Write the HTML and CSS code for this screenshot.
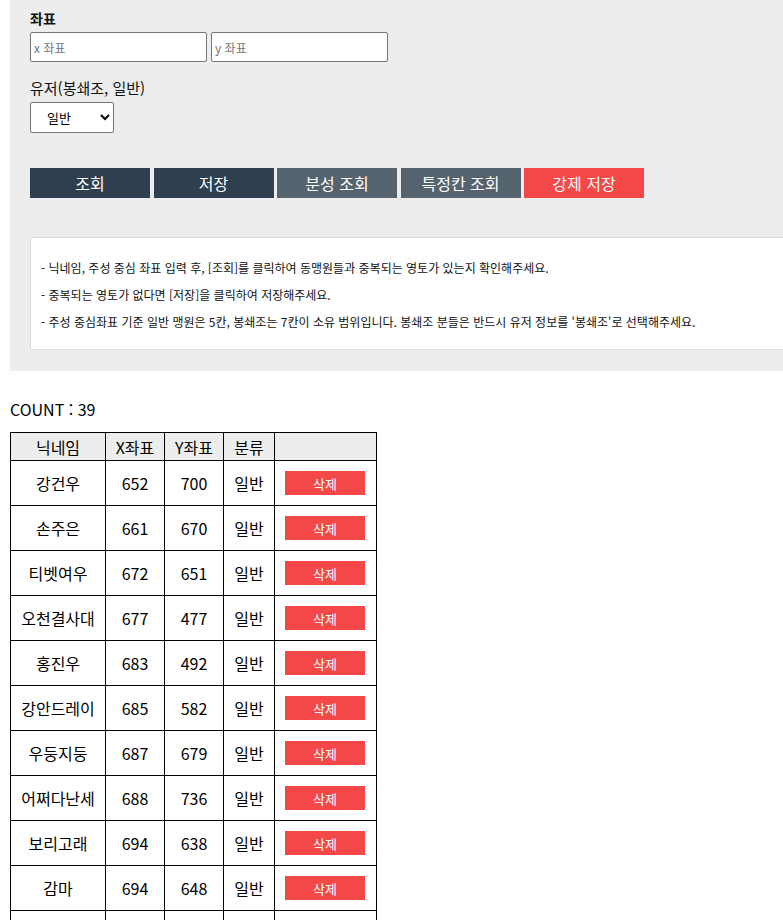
FILE: index.html
```html
<!DOCTYPE html>
<html lang="ko">
<head>
<meta charset="utf-8">
<link rel="stylesheet" href="styles.css">
</head>
<body>
<div class="panel">
  <div class="label">좌표</div>
  <div class="coords">
    <input class="field" type="text" placeholder="x 좌표">
    <input class="field" type="text" placeholder="y 좌표">
  </div>
  <div class="label label2">유저(봉쇄조, 일반)</div>
  <select class="sel">
    <option>일반</option>
    <option>봉쇄조</option>
  </select>
  <div class="buttons">
    <button class="btn dark">조회</button>
    <button class="btn dark">저장</button>
    <button class="btn slate">분성 조회</button>
    <button class="btn slate">특정칸 조회</button>
    <button class="btn red">강제 저장</button>
  </div>
  <div class="info">
    <p>- 닉네임, 주성 중심 좌표 입력 후, [조회]를 클릭하여 동맹원들과 중복되는 영토가 있는지 확인해주세요.</p>
    <p>- 중복되는 영토가 없다면 [저장]을 클릭하여 저장해주세요.</p>
    <p>- 주성 중심좌표 기준 일반 맹원은 5칸, 봉쇄조는 7칸이 소유 범위입니다. 봉쇄조 분들은 반드시 유저 정보를 '봉쇄조'로 선택해주세요.</p>
  </div>
</div>
<div class="count">COUNT : 39</div>
<table class="list">
  <thead>
    <tr><th class="c1">닉네임</th><th class="c2">X좌표</th><th class="c3">Y좌표</th><th class="c4">분류</th><th class="c5"></th></tr>
  </thead>
  <tbody>
    <tr><td>강건우</td><td>652</td><td>700</td><td>일반</td><td><button class="del">삭제</button></td></tr>
    <tr><td>손주은</td><td>661</td><td>670</td><td>일반</td><td><button class="del">삭제</button></td></tr>
    <tr><td>티벳여우</td><td>672</td><td>651</td><td>일반</td><td><button class="del">삭제</button></td></tr>
    <tr><td>오천결사대</td><td>677</td><td>477</td><td>일반</td><td><button class="del">삭제</button></td></tr>
    <tr><td>홍진우</td><td>683</td><td>492</td><td>일반</td><td><button class="del">삭제</button></td></tr>
    <tr><td>강안드레이</td><td>685</td><td>582</td><td>일반</td><td><button class="del">삭제</button></td></tr>
    <tr><td>우둥지둥</td><td>687</td><td>679</td><td>일반</td><td><button class="del">삭제</button></td></tr>
    <tr><td>어쩌다난세</td><td>688</td><td>736</td><td>일반</td><td><button class="del">삭제</button></td></tr>
    <tr><td>보리고래</td><td>694</td><td>638</td><td>일반</td><td><button class="del">삭제</button></td></tr>
    <tr><td>감마</td><td>694</td><td>648</td><td>일반</td><td><button class="del">삭제</button></td></tr>
    <tr class="empty"><td></td><td></td><td></td><td></td><td></td></tr>
  </tbody>
</table>
</body>
</html>
```
FILE: styles.css
```css
html, body {
  margin: 0;
  padding: 0;
  overflow-x: hidden;
}
body {
  font-family: "Noto Sans CJK KR", "Noto Sans", sans-serif;
  color: #000;
  background: #fff;
}
.panel {
  margin-left: 10px;
  width: 1000px;
  background: #ededed;
  padding: 8px 20px 21px;
  box-sizing: border-box;
}
.label {
  font-size: 14px;
  font-weight: 700;
  line-height: 20px;
  color: #111;
}
.coords {
  display: flex;
  gap: 4px;
  margin-top: 4px;
}
.field {
  width: 177px;
  height: 30px;
  box-sizing: border-box;
  border: 1px solid #767676;
  border-radius: 2px;
  padding: 0 3px;
  font-family: "Noto Sans CJK KR", sans-serif;
  font-size: 12px;
  background: #fff;
}
.field::placeholder {
  color: #757575;
}
.label2 {
  margin-top: 16px;
  font-size: 15px;
  font-weight: 400;
}
.sel {
  display: block;
  margin-top: 4px;
  width: 84px;
  height: 31px;
  box-sizing: border-box;
  border: 1px solid #767676;
  border-radius: 2px;
  background: #fff;
  font-family: "Noto Sans CJK KR", sans-serif;
  font-size: 13px;
  padding-left: 12px;
}
.buttons {
  display: flex;
  gap: 3.5px;
  margin-top: 35px;
}
.btn {
  width: 120px;
  height: 30px;
  border: none;
  color: #fff;
  font-family: "Noto Sans CJK KR", sans-serif;
  font-size: 16px;
  padding: 0;
}
.btn.dark { background: #2e3f4f; }
.btn.slate { background: #55636e; }
.btn.red { background: #f44848; }
.info {
  margin-top: 39px;
  background: #fff;
  border: 1px solid #dcdcdc;
  padding: 21px 10px 19px;
  font-size: 12px;
  line-height: 17px;
  color: #111;
}
.info p {
  margin: 0 0 10px;
}
.info p:last-child {
  margin-bottom: 0;
}
.count {
  margin: 28px 0 0 10px;
  font-size: 16px;
  line-height: 20px;
}
.list {
  margin: 13px 0 0 10px;
  border-collapse: collapse;
  font-size: 16px;
}
.list th, .list td {
  border: 1px solid #000;
  text-align: center;
  padding: 0;
}
.list th {
  background: #ededed;
  font-weight: 400;
  height: 27px;
}
.list td {
  height: 44px;
}
.c1 { width: 94px; }
.c2 { width: 58px; }
.c3 { width: 58px; }
.c4 { width: 50px; }
.c5 { width: 101px; }
.del {
  display: block;
  margin: 0 0 0 10px;
  width: 80px;
  height: 24px;
  border: none;
  background: #f44848;
  color: #fff;
  font-family: "Noto Sans CJK KR", sans-serif;
  font-size: 13px;
  padding: 0;
}
```
